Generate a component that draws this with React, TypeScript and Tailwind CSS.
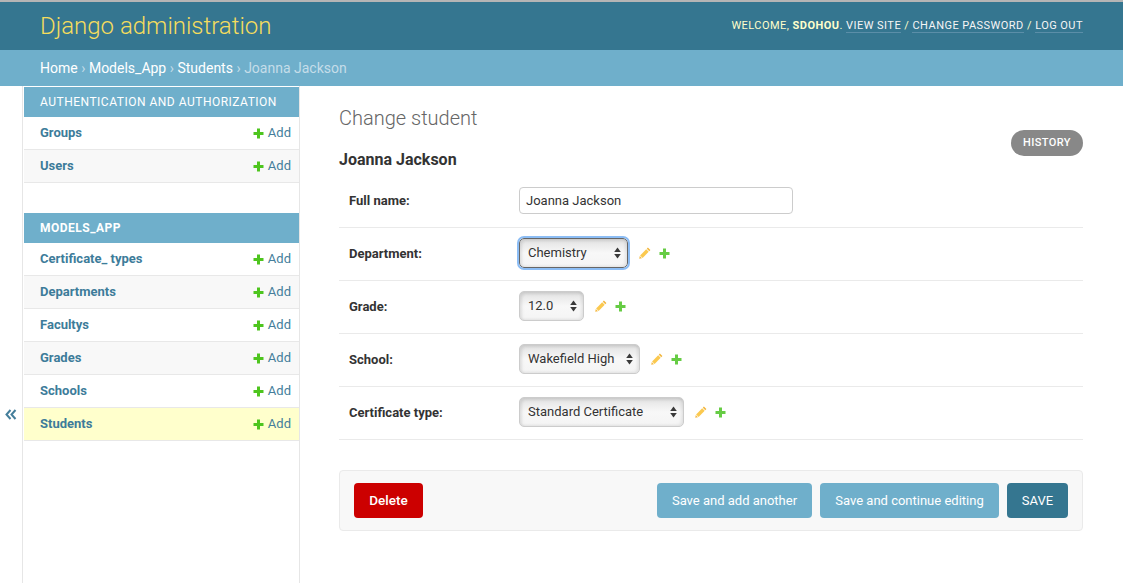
const font = { fontFamily: "Roboto, 'Liberation Sans', sans-serif" };

function Plus({ className = "" }: { className?: string }) {
  return (
    <svg width="11" height="11" viewBox="0 0 11 11" className={className}>
      <path d="M4 0.5h3v3.5h3.5v3H7v3.5H4V7H0.5V4H4z" fill="currentColor" />
    </svg>
  );
}

function Pencil() {
  return (
    <svg width="12" height="12" viewBox="0 0 12 12">
      <path d="M8.9 0.6 11.4 3.1 10.3 4.2 7.8 1.7z" fill="#f2b63c" />
      <path d="M7.2 2.3 9.7 4.8 3.6 10.9 1.1 8.4z" fill="#fbc94f" />
      <path d="M0.8 9 3 11.2 0.2 11.8z" fill="#f5b942" />
    </svg>
  );
}

function SelectArrows() {
  return (
    <svg width="7" height="12" viewBox="0 0 7 12" className="absolute right-[6px] top-1/2 -translate-y-1/2">
      <path d="M3.5 0.5 6.8 5H0.2z" fill="#3a3a3a" />
      <path d="M3.5 11.5 0.2 7H6.8z" fill="#3a3a3a" />
    </svg>
  );
}

function Select({ value, width, focused }: { value: string; width: string; focused?: boolean }) {
  return (
    <div
      className={`relative flex h-[30px] items-center rounded-[5px] border bg-gradient-to-b from-[#e2e2e2] via-[#f8f8f8] to-[#f4f4f4] pb-px pl-2 text-[13px] text-[#333] shadow-[inset_2px_2px_3px_rgba(0,0,0,0.1),inset_-2px_-1px_3px_rgba(0,0,0,0.08)] ${width} ${
        focused ? "border-[#666] outline outline-[2px] outline-[#8cbdf5]" : "border-[#ccc]"
      }`}
    >
      {value}
      <SelectArrows />
    </div>
  );
}

function SideRow({ name, alt, active }: { name: string; alt?: boolean; active?: boolean }) {
  return (
    <div
      className={`flex h-[33px] items-center justify-between border-b border-[#e8e8e8] pl-4 pr-2 text-[13px] ${
        active ? "bg-[#ffffcc]" : alt ? "bg-[#f8f8f8]" : "bg-white"
      }`}
    >
      <span className="font-bold text-[#3d7c9a]">{name}</span>
      <span className="flex items-center gap-[4px] text-[#447e9b]">
        <Plus className="text-[#4ec51e]" />
        Add
      </span>
    </div>
  );
}

function Caption({ text, current }: { text: string; current?: boolean }) {
  return (
    <div
      className={`flex h-[30px] items-center bg-[#6fafcb] pl-4 text-[12px] tracking-[0.5px] text-white ${
        current ? "font-bold" : ""
      }`}
    >
      {text}
    </div>
  );
}

function FormRow({ label, children }: { label: string; children: React.ReactNode }) {
  return (
    <div className="flex h-[53px] items-center border-b border-[#eaeaea] pl-[10px]">
      <div className="w-[170px] text-[13px] font-bold text-[#333]">{label}</div>
      <div className="flex items-center pb-[2px]">{children}</div>
    </div>
  );
}

function Related() {
  return (
    <div className="ml-[11px] flex items-center gap-[8px]">
      <Pencil />
      <Plus className="text-[#66cc44]" />
    </div>
  );
}

function Button({ label, className }: { label: string; className: string }) {
  return (
    <div className={`flex h-[35px] items-center justify-center rounded-[4px] text-white ${className}`}>{label}</div>
  );
}

export default function App() {
  return (
    <div style={font} className="flex h-[583px] w-[1123px] flex-col overflow-hidden bg-white">
      <div className="h-[2px] bg-[#b5b5b5]" />
      <header className="flex h-[48px] items-center justify-between bg-[#357690] pl-10 pr-10">
        <div className="text-[24px] font-light text-[#f5dd5d]">Django administration</div>
        <div className="text-[11px] tracking-[0.46px] text-[#ffffcc]">
          WELCOME, <b>SDOHOU</b>.{" "}
          <span className="border-b border-[#5b8ea8] text-[#f5f5f5]">VIEW SITE</span> /{" "}
          <span className="border-b border-[#5b8ea8] text-[#f5f5f5]">CHANGE PASSWORD</span> /{" "}
          <span className="border-b border-[#5b8ea8] text-[#f5f5f5]">LOG OUT</span>
        </div>
      </header>
      <div className="flex h-[36px] items-center bg-[#6fafcb] pl-10 text-[14px] text-white">
        Home <span className="mx-[3.5px] text-[#c5dde9]">›</span> Models_App{" "}
        <span className="mx-[3.5px] text-[#c5dde9]">›</span> Students{" "}
        <span className="mx-[3.5px] text-[#c5dde9]">›</span> <span className="text-[#c5dde9]">Joanna Jackson</span>
      </div>

      <div className="flex min-h-0 flex-1">
        <div className="flex w-[22px] items-center justify-center pt-[160px] text-[20px] leading-none text-[#447e9b]">
          <svg width="12" height="11" viewBox="0 0 12 11" fill="none" stroke="currentColor" strokeWidth="2">
            <path d="M5.5 1 1.5 5.5 5.5 10" />
            <path d="M10.5 1 6.5 5.5 10.5 10" />
          </svg>
        </div>
        <aside className="w-[278px] shrink-0 border-x border-x-[#e6e6e6] pt-px pl-px">
          <Caption text="AUTHENTICATION AND AUTHORIZATION" />
          <SideRow name="Groups" />
          <SideRow name="Users" alt />
          <div className="h-[30px]" />
          <Caption text="MODELS_APP" current />
          <SideRow name="Certificate_ types" />
          <SideRow name="Departments" alt />
          <SideRow name="Facultys" />
          <SideRow name="Grades" alt />
          <SideRow name="Schools" />
          <SideRow name="Students" active />
        </aside>

        <main className="min-w-0 flex-1 pl-[39px] pr-10">
          <div className="flex items-start justify-between">
            <div>
              <h1 className="mt-[19px] text-[20px] leading-[26px] font-light text-[#666]">Change student</h1>
              <h2 className="mt-[19px] text-[16px] leading-[20px] font-bold text-[#333]">Joanna Jackson</h2>
            </div>
            <div className="mt-[44px] flex h-[26px] w-[72px] items-center justify-center rounded-full bg-[#888] text-[11px] font-medium tracking-[0.4px] text-white">
              HISTORY
            </div>
          </div>

          <div className="mt-[5px]">
            <FormRow label="Full name:">
              <div className="flex h-[27px] w-[274px] items-center rounded-[4px] border border-[#ccc] px-[6px] pt-px text-[13px] text-[#333]">
                Joanna Jackson
              </div>
            </FormRow>
            <FormRow label="Department:">
              <Select value="Chemistry" width="w-[109px]" focused />
              <Related />
            </FormRow>
            <FormRow label="Grade:">
              <Select value="12.0" width="w-[65px]" />
              <Related />
            </FormRow>
            <FormRow label="School:">
              <Select value="Wakefield High" width="w-[121px]" />
              <Related />
            </FormRow>
            <FormRow label="Certificate type:">
              <Select value="Standard Certificate" width="w-[165px]" />
              <Related />
            </FormRow>
          </div>

          <div className="mt-[30px] flex h-[61px] items-center justify-between rounded-[4px] border border-[#eaeaea] bg-[#f8f8f8] px-[14px]">
            <Button label="Delete" className="w-[69px] bg-[#cc0000] text-[13.5px] font-medium" />
            <div className="flex gap-2">
              <Button label="Save and add another" className="w-[155px] bg-[#6fafcb] text-[13px]" />
              <Button label="Save and continue editing" className="w-[179px] bg-[#6fafcb] text-[13px]" />
              <Button label="SAVE" className="w-[61px] bg-[#357690] text-[13px]" />
            </div>
          </div>
        </main>
      </div>
    </div>
  );
}
